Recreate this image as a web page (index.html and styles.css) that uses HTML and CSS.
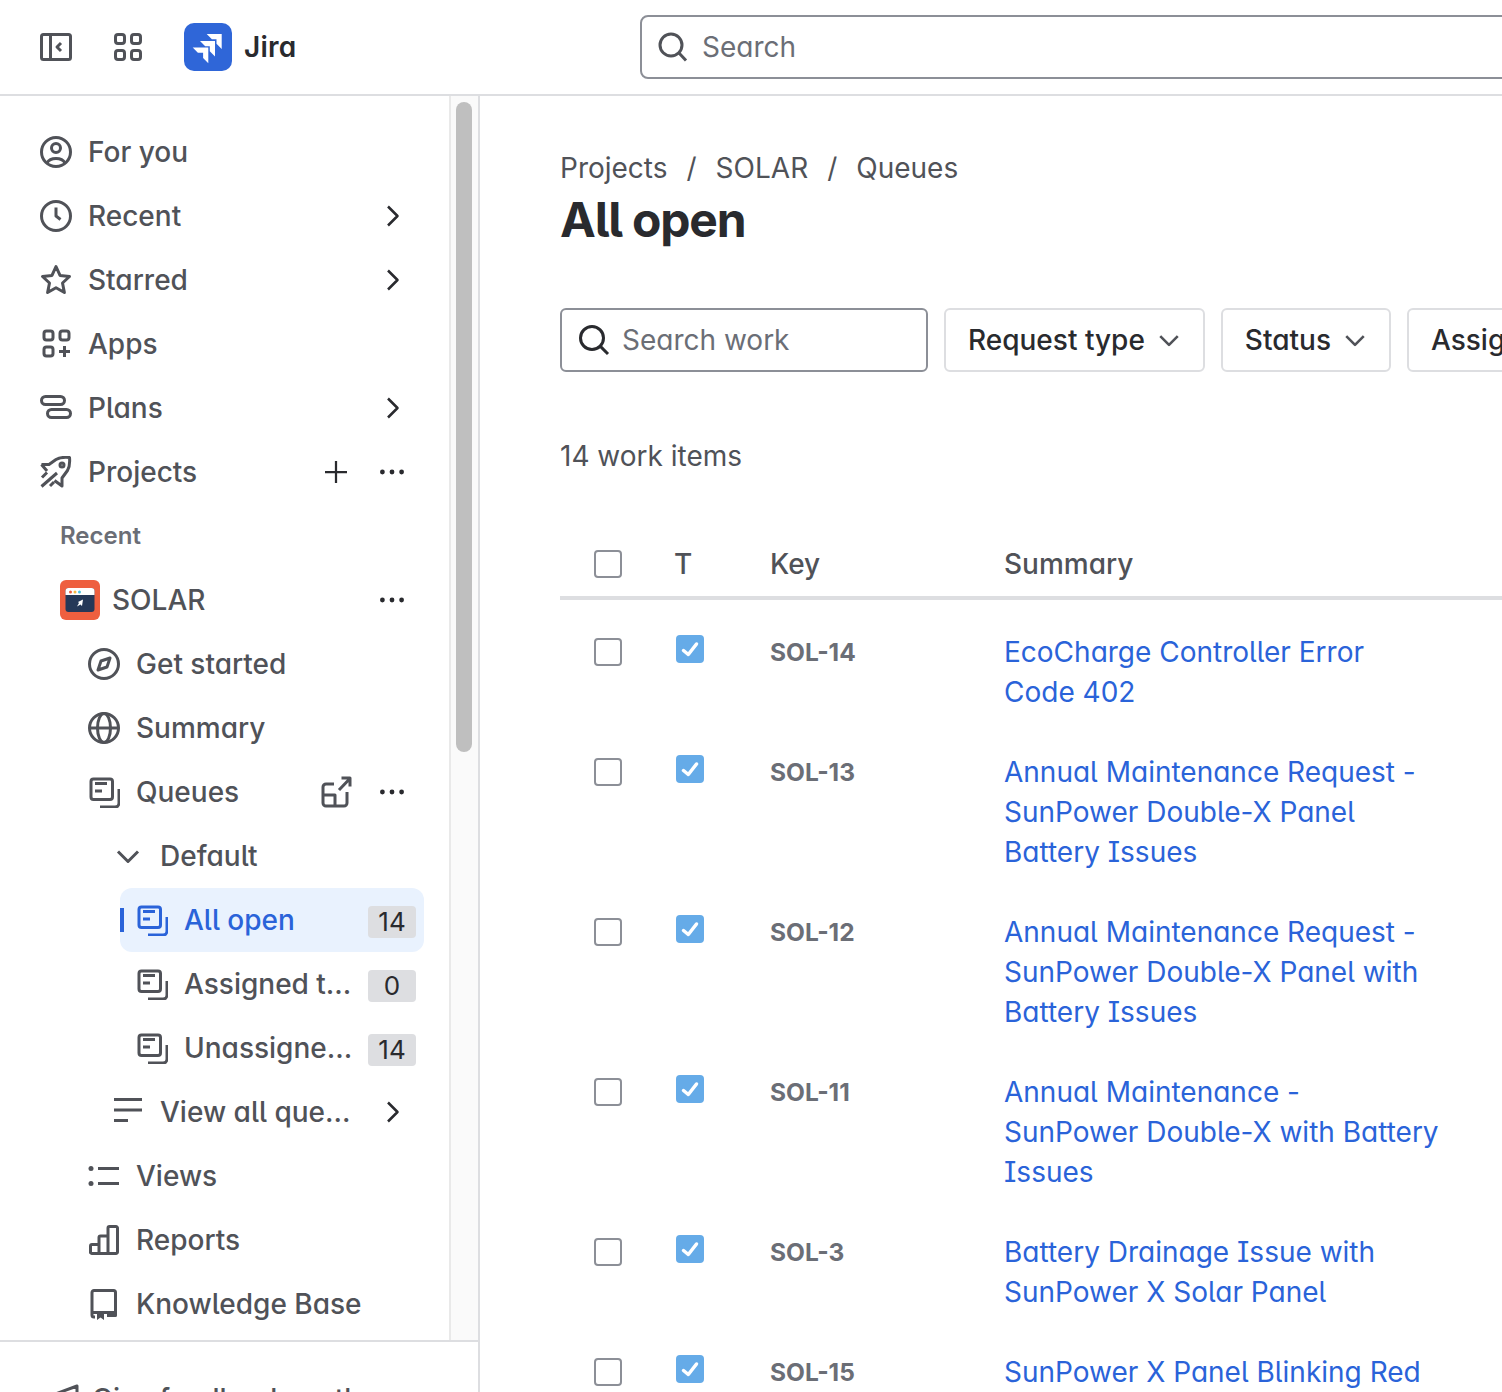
FILE: index.html
```html
<!DOCTYPE html>
<html lang="en">
<head>
    <meta charset="UTF-8">
    <meta name="viewport" content="width=device-width, initial-scale=1.0">
    <title>All open - Jira</title>
    <link rel="stylesheet" href="styles.css">
</head>
<body>
    <svg class="sprite" width="0" height="0">
        <symbol id="i-queue" viewBox="0 0 16 16"><rect x="1.500" y="1.500" width="10.750" height="10.250" rx="1.250"/><path d="M3.500 3.750h6M3.500 7.500h3.500M15.500 6.500v7a2 2 0 0 1-2 2H6"/></symbol>
        <symbol id="i-chev-right" viewBox="0 0 16 16"><path class="dark" d="M6 3.250 10.750 8 6 12.750"/></symbol>
        <symbol id="i-dots" viewBox="0 0 16 16"><circle class="dot dot-dark" cx="3.200" cy="8" r="1.200"/><circle class="dot dot-dark" cx="8" cy="8" r="1.200"/><circle class="dot dot-dark" cx="12.800" cy="8" r="1.200"/></symbol>
        <symbol id="i-chev-down" viewBox="0 0 16 16"><path d="M3 5.750 8 10.750 13 5.750"/></symbol>
    </svg>

    <header class="topbar">
        <div class="top-left">
            <svg class="icon" viewBox="0 0 16 16"><rect x="0.750" y="1.750" width="14.500" height="12.500" rx="1"/><path d="M5.250 2v12M10.500 6 8.500 8l2 2"/></svg>
            <svg class="icon" viewBox="0 0 16 16"><rect x="1.750" y="1.750" width="4.500" height="4.500" rx="1.250"/><rect x="9.750" y="1.750" width="4.500" height="4.500" rx="1.250"/><rect x="1.750" y="9.750" width="4.500" height="4.500" rx="1.250"/><rect x="9.750" y="9.750" width="4.500" height="4.500" rx="1.250"/></svg>
            <div class="brand">
                <svg class="logo" viewBox="0 0 48 48">
                    <rect width="48" height="48" rx="10" fill="#2f66d8"/>
                    <path fill="#fff" d="M22.700 11H37.700V26L32.500 20.800V16.200H27.900ZM16 18H31V33.500L25.800 28.300V23.200H21.200ZM8.700 24.500H24.300V40.300L19.100 35.100V29.700H13.900Z"/>
                </svg>
                <span class="brand-name">Jira</span>
            </div>
        </div>
        <div class="top-search">
            <svg class="icon" viewBox="0 0 16 16"><circle cx="7.500" cy="7" r="5.500"/><path d="M11.500 11 15 14.750"/></svg>
            <span>Search</span>
        </div>
    </header>

    <div class="layout">
        <aside class="sidebar">
            <div class="side-scroll">
                <nav class="nav">
                    <a class="item">
                        <svg class="icon" viewBox="0 0 16 16"><circle cx="8" cy="8" r="7.250"/><circle cx="8" cy="6" r="2.250"/><path d="M3.500 13.500c.8-1.500 2-2.250 4.500-2.250s3.700.75 4.500 2.250"/></svg>
                        <span class="label">For you</span>
                    </a>
                    <a class="item">
                        <svg class="icon" viewBox="0 0 16 16"><circle cx="8" cy="8" r="7.250"/><path d="M8 3.750V8l2.250 1.750"/></svg>
                        <span class="label">Recent</span>
                        <svg class="slot"><use href="#i-chev-right"/></svg>
                    </a>
                    <a class="item">
                        <svg class="icon" viewBox="0 0 16 16"><path d="M8 1.250 10 5.700l4.750.55-3.500 3.250.95 4.750L8 11.900l-4.200 2.350.95-4.750-3.500-3.250L6 5.700z"/></svg>
                        <span class="label">Starred</span>
                        <svg class="slot"><use href="#i-chev-right"/></svg>
                    </a>
                    <a class="item">
                        <svg class="icon" viewBox="0 0 16 16"><rect x="2" y="1.500" width="4.500" height="4.500" rx="1.250"/><rect x="10" y="1.500" width="4.500" height="4.500" rx="1.250"/><rect x="2" y="9.500" width="4.500" height="4.500" rx="1.250"/><path d="M12.250 9v5.500M9.500 11.750H15"/></svg>
                        <span class="label">Apps</span>
                    </a>
                    <a class="item">
                        <svg class="icon" viewBox="0 0 16 16"><rect x="0.750" y="2.250" width="11.500" height="4" rx="2"/><rect x="3.750" y="8.750" width="11.500" height="4" rx="2"/></svg>
                        <span class="label">Plans</span>
                        <svg class="slot"><use href="#i-chev-right"/></svg>
                    </a>
                    <a class="item">
                        <svg class="icon" viewBox="0 0 16 16"><path d="M.750 4.250H4.500L8 1.750C9.500.900 12 .500 14.750.750c.250 2.750-.100 5-1 6.500L11 11v4l-3.750-2.750"/><path d="M.750 4.250 3.500 7.500M1 10.750l2.500-2.500M.750 15.250 8.500 8.500M5 15l2-2"/><circle cx="11" cy="4.500" r="1"/></svg>
                        <span class="label">Projects</span>
                        <svg class="slot slot-wide" viewBox="0 0 48 48"><path class="dark thin" d="M24 13v22M13 24h22"/></svg>
                        <svg class="slot"><use href="#i-dots"/></svg>
                    </a>
                    <div class="item item-heading">Recent</div>
                    <a class="item item-project">
                        <svg class="project-icon" viewBox="0 0 40 40">
                            <rect width="40" height="40" rx="6" fill="#ee5f3f"/>
                            <rect x="5.500" y="8" width="29" height="24" rx="3" fill="#253858"/>
                            <path fill="#fff" d="M5.500 15v-4a3 3 0 0 1 3-3h23a3 3 0 0 1 3 3v4z"/>
                            <circle cx="10.500" cy="12" r="1.500" fill="#ee5f3f"/><circle cx="15" cy="12" r="1.500" fill="#f5b942"/><circle cx="19.500" cy="12" r="1.500" fill="#4ec3e0"/>
                            <path fill="#fff" d="M23 19.500 22 26 20.500 24.500 17 26.500 19 23 18 22z"/>
                        </svg>
                        <span class="label">SOLAR</span>
                        <svg class="slot"><use href="#i-dots"/></svg>
                    </a>
                    <a class="item item-sub">
                        <svg class="icon" viewBox="0 0 16 16"><circle cx="8" cy="8" r="7.250"/><path d="M11 5 9.500 9.500 5 11l1.500-4.500z"/></svg>
                        <span class="label">Get started</span>
                    </a>
                    <a class="item item-sub">
                        <svg class="icon" viewBox="0 0 16 16"><circle cx="8" cy="8" r="7.250"/><ellipse cx="8" cy="8" rx="3.250" ry="7.250"/><path d="M1 8h14"/></svg>
                        <span class="label">Summary</span>
                    </a>
                    <a class="item item-sub">
                        <svg class="icon"><use href="#i-queue"/></svg>
                        <span class="label">Queues</span>
                        <svg class="slot slot-wide" viewBox="0 0 48 48"><path d="M22 16h-8a3 3 0 0 0-3 3v16a3 3 0 0 0 3 3h18a3 3 0 0 0 3-3V24M11 27h12v11M27 22 37.500 11M29.500 10h8.500v8.500"/></svg>
                        <svg class="slot"><use href="#i-dots"/></svg>
                    </a>
                    <a class="item item-group">
                        <svg class="icon"><use href="#i-chev-down"/></svg>
                        <span class="label">Default</span>
                    </a>
                    <a class="item item-queue item-active">
                        <svg class="icon"><use href="#i-queue"/></svg>
                        <span class="label">All open</span>
                        <span class="count">14</span>
                    </a>
                    <a class="item item-queue">
                        <svg class="icon"><use href="#i-queue"/></svg>
                        <span class="label">Assigned to me</span>
                        <span class="count">0</span>
                    </a>
                    <a class="item item-queue">
                        <svg class="icon"><use href="#i-queue"/></svg>
                        <span class="label">Unassigned work</span>
                        <span class="count">14</span>
                    </a>
                    <a class="item item-group">
                        <svg class="icon" viewBox="0 0 16 16"><path d="M1 1.750h14M1 7h14M1 12.250h7"/></svg>
                        <span class="label">View all queues</span>
                        <svg class="slot"><use href="#i-chev-right"/></svg>
                    </a>
                    <a class="item item-sub">
                        <svg class="icon" viewBox="0 0 16 16"><circle class="dot" cx="1.500" cy="4.250" r="1.250"/><circle class="dot" cx="1.500" cy="11.750" r="1.250"/><path d="M5 4.250h10.500M5 11.750h10.500"/></svg>
                        <span class="label">Views</span>
                    </a>
                    <a class="item item-sub">
                        <svg class="icon" viewBox="0 0 16 16"><path d="M1.250 14.750V11a.75.75 0 0 1 .75-.75h3.500M5.500 14.750v-8a.75.75 0 0 1 .75-.75H10v8.750M10 14.750V2a.75.75 0 0 1 .75-.75H14a.75.75 0 0 1 .75.75v12a.75.75 0 0 1-.75.75H2a.75.75 0 0 1-.75-.75"/></svg>
                        <span class="label">Reports</span>
                    </a>
                    <a class="item item-sub">
                        <svg class="icon" viewBox="0 0 16 16"><path d="M3.500 14.500H3a1 1 0 0 1-1-1V2.250a1 1 0 0 1 1-1h9.750a1 1 0 0 1 1 1V13.800H9.500M2 12.250h11.750"/><path class="solid" d="M4.500 12.750h3.500V16l-1.750-1.250L4.500 16z"/></svg>
                        <span class="label">Knowledge Base</span>
                    </a>
                </nav>
                <div class="scroll-track"><div class="scroll-thumb"></div></div>
            </div>
            <div class="side-footer">
                <svg class="icon" viewBox="0 0 16 16"><path d="M1 6.500 14.500 1.500v13L1 10.500z"/></svg>
                <span>Give feedback on the new</span>
            </div>
        </aside>

        <main class="content">
            <div class="crumbs">
                <span>Projects</span><span class="sep">/</span><span>SOLAR</span><span class="sep">/</span><span>Queues</span>
            </div>
            <h1 class="title">All open</h1>

            <div class="filters">
                <div class="search-work">
                    <svg class="icon icon-dark" viewBox="0 0 16 16"><circle cx="7" cy="7" r="5.750"/><path d="M11.200 11.200 15 15"/></svg>
                    <span>Search work</span>
                </div>
                <button class="filter-btn">Request type <svg class="icon-sm"><use href="#i-chev-down"/></svg></button>
                <button class="filter-btn">Status <svg class="icon-sm"><use href="#i-chev-down"/></svg></button>
                <button class="filter-btn">Assignee <svg class="icon-sm"><use href="#i-chev-down"/></svg></button>
            </div>

            <p class="count-line">14 work items</p>

            <div class="table-head">
                <div class="cell-check"><span class="box"></span></div>
                <div class="col-t">T</div>
                <div>Key</div>
                <div>Summary</div>
            </div>

            <div class="table-body">
                <div class="row">
                    <div class="cell-check"><span class="box"></span></div>
                    <div class="cell-type"><svg class="type-icon" viewBox="0 0 28 28"><rect width="28" height="28" rx="4"/><path d="M7.500 15.500 12.300 19.500 20.500 9"/></svg></div>
                    <div class="key">SOL-14</div>
                    <div class="summary">EcoCharge Controller Error<br>Code 402</div>
                </div>
                <div class="row">
                    <div class="cell-check"><span class="box"></span></div>
                    <div class="cell-type"><svg class="type-icon" viewBox="0 0 28 28"><rect width="28" height="28" rx="4"/><path d="M7.500 15.500 12.300 19.500 20.500 9"/></svg></div>
                    <div class="key">SOL-13</div>
                    <div class="summary">Annual Maintenance Request -<br>SunPower Double-X Panel<br>Battery Issues</div>
                </div>
                <div class="row">
                    <div class="cell-check"><span class="box"></span></div>
                    <div class="cell-type"><svg class="type-icon" viewBox="0 0 28 28"><rect width="28" height="28" rx="4"/><path d="M7.500 15.500 12.300 19.500 20.500 9"/></svg></div>
                    <div class="key">SOL-12</div>
                    <div class="summary">Annual Maintenance Request -<br>SunPower Double-X Panel with<br>Battery Issues</div>
                </div>
                <div class="row">
                    <div class="cell-check"><span class="box"></span></div>
                    <div class="cell-type"><svg class="type-icon" viewBox="0 0 28 28"><rect width="28" height="28" rx="4"/><path d="M7.500 15.500 12.300 19.500 20.500 9"/></svg></div>
                    <div class="key">SOL-11</div>
                    <div class="summary">Annual Maintenance -<br>SunPower Double-X with Battery<br>Issues</div>
                </div>
                <div class="row">
                    <div class="cell-check"><span class="box"></span></div>
                    <div class="cell-type"><svg class="type-icon" viewBox="0 0 28 28"><rect width="28" height="28" rx="4"/><path d="M7.500 15.500 12.300 19.500 20.500 9"/></svg></div>
                    <div class="key">SOL-3</div>
                    <div class="summary">Battery Drainage Issue with<br>SunPower X Solar Panel</div>
                </div>
                <div class="row">
                    <div class="cell-check"><span class="box"></span></div>
                    <div class="cell-type"><svg class="type-icon" viewBox="0 0 28 28"><rect width="28" height="28" rx="4"/><path d="M7.500 15.500 12.300 19.500 20.500 9"/></svg></div>
                    <div class="key">SOL-15</div>
                    <div class="summary">SunPower X Panel Blinking Red</div>
                </div>
            </div>
        </main>
    </div>
</body>
</html>
```

FILE: styles.css
```css
* {
    box-sizing: border-box;
}

body {
    margin: 0;
    height: 100vh;
    overflow: hidden;
    font-family: Inter, "Noto Sans", sans-serif;
    font-size: 28px;
    font-feature-settings: "cv11", "cv05", "cv08";
    color: #505258;
    background-color: #fff;
    display: flex;
    flex-direction: column;
}

.sprite {
    position: absolute;
}

symbol path, symbol rect {
    fill: none;
}

.icon, .icon-sm, .slot {
    flex: none;
    fill: none;
    stroke: #505258;
    stroke-width: 1.5;
    stroke-linejoin: round;
}

.icon {
    width: 32px;
    height: 32px;
}

.icon-dark {
    stroke: #292a2e;
}

.dot, .solid {
    fill: #505258;
    stroke: none;
}

.dot-dark {
    fill: #292a2e;
}

/* top bar */
.topbar {
    flex: none;
    height: 96px;
    border-bottom: 2px solid #dddee1;
    display: flex;
    align-items: center;
}

.top-left {
    flex: none;
    width: 640px;
    padding-left: 40px;
    display: flex;
    align-items: center;
    gap: 40px;
}

.brand {
    display: flex;
    align-items: center;
    gap: 12px;
}

.logo {
    width: 48px;
    height: 48px;
}

.brand-name {
    font-weight: 600;
    color: #292a2e;
    letter-spacing: 0.2px;
}

.top-search {
    flex: none;
    width: 1000px;
    height: 64px;
    border: 2px solid #8c8f97;
    border-radius: 8px;
    display: flex;
    align-items: center;
    gap: 14px;
    padding-left: 14px;
    color: #6b6e76;
}

/* sidebar */
.layout {
    flex: 1;
    display: flex;
    min-height: 0;
}

.sidebar {
    flex: none;
    width: 480px;
    border-right: 2px solid #dddee1;
    display: flex;
    flex-direction: column;
}

.side-scroll {
    flex: none;
    height: 1246px;
    display: flex;
    border-bottom: 2px solid #dddee1;
}

.nav {
    flex: none;
    width: 449px;
    padding: 24px 25px 0 0;
}

.item {
    height: 64px;
    display: flex;
    align-items: center;
    gap: 16px;
    padding-left: 40px;
    padding-right: 8px;
    white-space: nowrap;
    font-weight: 500;
}

.label {
    flex: 1;
    min-width: 0;
    overflow: hidden;
    text-overflow: ellipsis;
}

.slot {
    width: 48px;
    height: 32px;
    stroke-width: 1.250;
}

.slot-wide {
    height: 48px;
    stroke-width: 3;
    margin-right: -8px;
}

.dark {
    stroke: #292a2e;
}

.thin {
    stroke-width: 2.250;
}

.item-heading {
    padding-left: 60px;
    padding-bottom: 2px;
    font-size: 24px;
    font-weight: 600;
    color: #6b6e76;
}

.item-project {
    padding-left: 60px;
    gap: 12px;
}

.project-icon {
    flex: none;
    width: 40px;
    height: 40px;
}

.item-sub {
    padding-left: 88px;
}

.item-group {
    padding-left: 112px;
}

.item-queue {
    margin-left: 120px;
    padding-left: 16px;
    position: relative;
    border-radius: 12px;
}

.item-active {
    background-color: #e9f2fe;
    color: #2a63d9;
}

.item-active .icon {
    stroke: #2a63d9;
}

.item-active::before {
    content: "";
    position: absolute;
    left: 0;
    top: 20px;
    width: 4px;
    height: 24px;
    background-color: #2a63d9;
}

.count {
    flex: none;
    width: 48px;
    height: 32px;
    margin-top: 4px;
    margin-left: -3px;
    line-height: 32px;
    font-size: 26px;
    font-weight: 400;
    text-align: center;
    border-radius: 4px;
    background-color: #dddee1;
    color: #292a2e;
}

.scroll-track {
    flex: 1;
    background-color: #fafafa;
    border-left: 2px solid #e9e9e9;
    padding: 6px 5px 0;
}

.scroll-thumb {
    width: 16px;
    height: 650px;
    border-radius: 8px;
    background-color: #bfbfbf;
}

.side-footer {
    display: flex;
    align-items: center;
    gap: 12px;
    padding: 57px 0 0 48px;
    white-space: nowrap;
    overflow: hidden;
    font-weight: 500;
}

/* main content */
.content {
    flex: 1;
    min-width: 0;
    overflow: hidden;
    padding: 52px 0 0 80px;
}

.crumbs {
    line-height: 40px;
    display: flex;
    gap: 19px;
}

.title {
    margin: 4px 0 0;
    font-size: 48px;
    line-height: 56px;
    font-weight: 700;
    letter-spacing: -1.2px;
    color: #292a2e;
}

.filters {
    margin-top: 60px;
    display: flex;
    gap: 16px;
}

.search-work {
    flex: none;
    width: 368px;
    height: 64px;
    border: 2px solid #8c8f97;
    border-radius: 6px;
    display: flex;
    align-items: center;
    gap: 12px;
    padding-left: 16px;
    color: #6b6e76;
}

.filter-btn {
    flex: none;
    height: 64px;
    padding: 0 20px 0 22px;
    border: 2px solid #dddee1;
    border-radius: 6px;
    background: #fff;
    font: inherit;
    font-feature-settings: inherit;
    font-weight: 500;
    color: #292a2e;
    display: flex;
    align-items: center;
    gap: 10px;
}

.icon-sm {
    width: 28px;
    height: 28px;
    stroke-width: 1.5;
}

.count-line {
    margin: 64px 0 0;
    line-height: 40px;
}

.table-head, .row {
    display: grid;
    grid-template-columns: 116px 94px 234px 1fr;
}

.table-head {
    margin-top: 60px;
    height: 64px;
    border-bottom: 4px solid #dddee1;
    align-items: center;
    font-weight: 500;
    padding-bottom: 4px;
}

.cell-check {
    padding-left: 34px;
    display: flex;
}

.col-t {
    margin-left: -2px;
}

.box {
    width: 28px;
    height: 28px;
    border: 2px solid #8c8f97;
    border-radius: 4px;
}

.table-body {
    padding-top: 32px;
}

.row {
    padding-bottom: 40px;
}

.row .cell-check {
    padding-top: 6px;
}

.cell-type {
    padding-top: 3px;
}

.type-icon {
    display: block;
    width: 28px;
    height: 28px;
    fill: #65abe8;
    stroke: none;
}

.type-icon path {
    fill: none;
    stroke: #fff;
    stroke-width: 3.500;
    stroke-linecap: round;
    stroke-linejoin: round;
}

.key {
    font-size: 24.500px;
    font-weight: 700;
    line-height: 40px;
    color: #6b6e76;
}

.summary {
    line-height: 40px;
    color: #2a63d9;
    white-space: nowrap;
}
```
